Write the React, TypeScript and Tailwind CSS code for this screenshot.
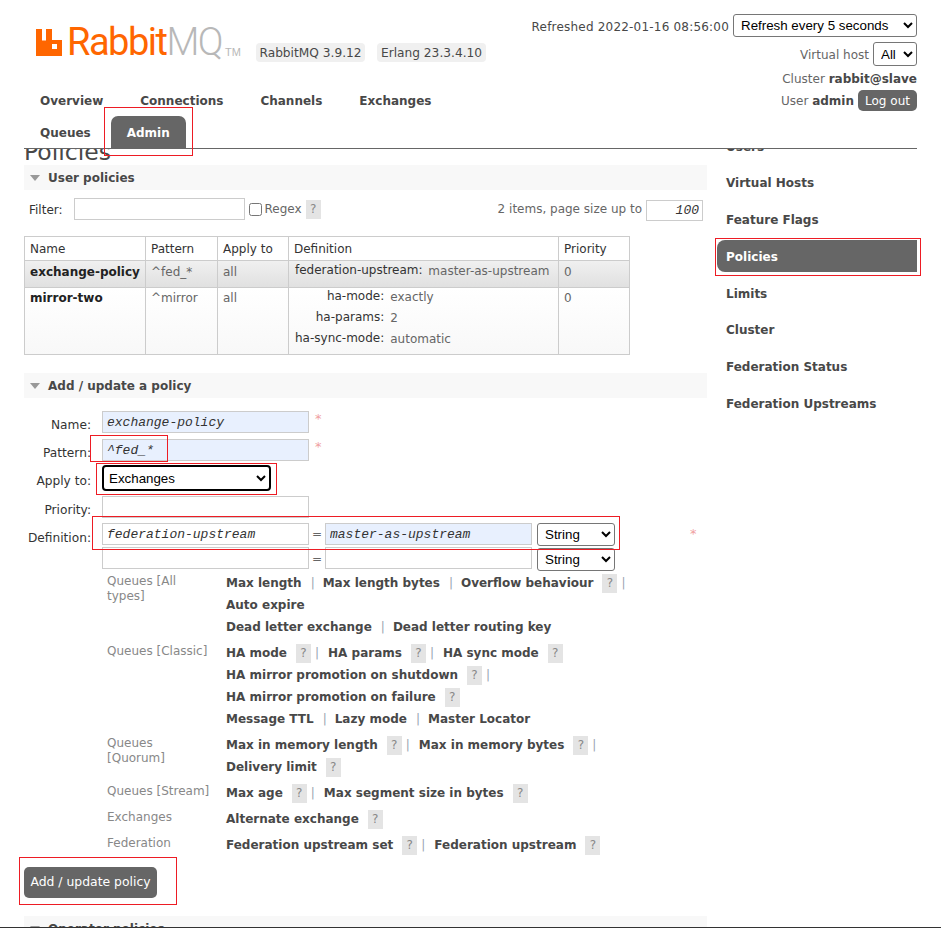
import { ReactNode } from "react";

const fontStack = "font-['DejaVu_Sans','Liberation_Sans',sans-serif]";

function Help({ className = "ml-[9px]" }: { className?: string }) {
    return (
        <span className={`inline-flex h-[19px] w-[15px] items-center justify-center bg-[#e4e4e4] text-[12px] font-normal text-[#888] ${className}`}>
            ?
        </span>
    );
}

function Sep({ tight }: { tight?: boolean }) {
    return <span className={`font-normal text-[#9aa5b1] ${tight ? "ml-[4px] mr-[9px]" : "ml-[9px] mr-[8px]"}`}>|</span>;
}

function SectionHeader({ title, className = "" }: { title: string; className?: string }) {
    return (
        <div className={`flex h-[25px] items-center bg-[#f8f8f8] pl-[6px] pt-[1px] ${className}`}>
            <span className="h-0 w-0 border-x-[5.5px] border-t-[6px] border-x-transparent border-t-[#999]" />
            <span className="ml-[8px] text-[12px] font-bold text-[#484848]">{title}</span>
        </div>
    );
}

function FormRow({ label, height, children }: { label: string; height: string; children: ReactNode }) {
    return (
        <div className={`flex items-center ${height}`}>
            <label className="w-[67px] shrink-0 pt-[7px] text-right text-[12.2px] text-[#333]">{label}</label>
            <div className="ml-[11px] flex items-center">{children}</div>
        </div>
    );
}

function MonoInput({ value, filled, className = "" }: { value?: string; filled?: boolean; className?: string }) {
    return (
        <input
            readOnly
            value={value ?? ""}
            className={`h-[22px] w-[207px] border border-[#ccc] px-[4px] font-['Liberation_Mono',monospace] text-[13px] text-[#333] italic ${filled ? "bg-[#e8f0fe]" : "bg-white"} ${className}`}
        />
    );
}

function NativeSelect({ value, className }: { value: string; className: string }) {
    return (
        <select
            value={value}
            onChange={() => undefined}
            className={`bg-white font-['Liberation_Sans',sans-serif] text-[13.33px] text-black ${className}`}
        >
            <option>{value}</option>
        </select>
    );
}

function Asterisk() {
    return <span className="ml-[6px] mt-[-8px] text-[13px] leading-none text-[#f0a0a0]">*</span>;
}

const helpGroups: { label: string; rows: ReactNode[] }[] = [
    {
        label: "Queues [All types]",
        rows: [
            <>
                <b>Max length</b>
                <Sep />
                <b>Max length bytes</b>
                <Sep />
                <b>Overflow behaviour</b>
                <Help />
                <Sep tight />
            </>,
            <b>Auto expire</b>,
            <>
                <b>Dead letter exchange</b>
                <Sep />
                <b>Dead letter routing key</b>
            </>,
        ],
    },
    {
        label: "Queues [Classic]",
        rows: [
            <>
                <b>HA mode</b>
                <Help />
                <Sep tight />
                <b>HA params</b>
                <Help />
                <Sep tight />
                <b>HA sync mode</b>
                <Help />
            </>,
            <>
                <b>HA mirror promotion on shutdown</b>
                <Help />
                <Sep tight />
            </>,
            <>
                <b>HA mirror promotion on failure</b>
                <Help />
            </>,
            <>
                <b>Message TTL</b>
                <Sep />
                <b>Lazy mode</b>
                <Sep />
                <b>Master Locator</b>
            </>,
        ],
    },
    {
        label: "Queues [Quorum]",
        rows: [
            <>
                <b>Max in memory length</b>
                <Help />
                <Sep tight />
                <b>Max in memory bytes</b>
                <Help />
                <Sep tight />
            </>,
            <>
                <b>Delivery limit</b>
                <Help />
            </>,
        ],
    },
    {
        label: "Queues [Stream]",
        rows: [
            <>
                <b>Max age</b>
                <Help />
                <Sep tight />
                <b>Max segment size in bytes</b>
                <Help />
            </>,
        ],
    },
    {
        label: "Exchanges",
        rows: [
            <>
                <b>Alternate exchange</b>
                <Help />
            </>,
        ],
    },
    {
        label: "Federation",
        rows: [
            <>
                <b>Federation upstream set</b>
                <Help />
                <Sep tight />
                <b>Federation upstream</b>
                <Help />
            </>,
        ],
    },
];

const sideItems = ["Users", "Virtual Hosts", "Feature Flags", "Policies", "Limits", "Cluster", "Federation Status", "Federation Upstreams"];

function DefinitionRow({ name, value }: { name: string; value: string }) {
    return (
        <tr>
            <td className="pr-[4px] text-right align-top text-[#333]">{name}</td>
            <td className="pl-[2px] pt-[1px] text-[#666]">{value}</td>
        </tr>
    );
}

export default function App() {
    return (
        <div className={`relative flex h-[928px] w-[941px] flex-col overflow-hidden bg-white text-[12px] text-[#484848] ${fontStack}`}>
            {/* header */}
            <header className="mx-[24px] flex h-[149px] shrink-0 justify-between border-b border-[#666]">
                <div>
                    <div className="flex h-[86px] items-start pl-[12px] pt-[29px]">
                        <div className="flex w-[220px] shrink-0 items-start">
                            <svg width="26" height="27" viewBox="0 0 26 27" className="shrink-0">
                                <path
                                    fill="#f60"
                                    fillRule="evenodd"
                                    d="M0 0h6v11.5h4V0h6v11h10v16H0ZM16 15v5h5v-5Z"
                                />
                            </svg>
                            <span className="ml-[5px] mt-[-10px] font-['Roboto',sans-serif] text-[38px] leading-[46px] tracking-[-1.5px] text-[#f60]">
                                Rabbit<span className="font-light text-[#b8b8b8]">MQ</span>
                            </span>
                            <span className="ml-[3px] mt-[17px] font-['Liberation_Sans',sans-serif] text-[11px] leading-[12px] text-[#b8b8b8]">TM</span>
                        </div>
                        <span className="mt-[14px] flex h-[19px] w-[109px] items-center justify-center rounded-[4px] bg-[#f0f0f0] pt-[1px] text-[12.2px]">RabbitMQ 3.9.12</span>
                        <span className="ml-[12px] mt-[14px] flex h-[19px] w-[109px] items-center justify-center rounded-[4px] bg-[#f0f0f0] pt-[1px] text-[12.2px]">Erlang 23.3.4.10</span>
                    </div>
                    <nav className="text-[12px] font-bold text-[#484848]">
                        <div className="flex h-[28px] items-center gap-[37px] pl-[16px] pt-[2px]">
                            <span>Overview</span>
                            <span>Connections</span>
                            <span>Channels</span>
                            <span>Exchanges</span>
                        </div>
                        <div className="mt-[2px] flex h-[32px] items-center pl-[16px]">
                            <span className="pt-[2px]">Queues</span>
                            <span className="ml-[20px] flex h-[32px] w-[75px] items-center justify-center rounded-t-[7px] bg-[#666] pt-[2px] text-white">Admin</span>
                        </div>
                    </nav>
                </div>
                <div className="flex flex-col items-end pt-[14px]">
                    <div className="flex items-center gap-[4px]">
                        <span className="pt-[2px] tracking-[0.2px]">Refreshed 2022-01-16 08:56:00</span>
                        <NativeSelect value="Refresh every 5 seconds" className="h-[23px] w-[184px] rounded-[3px] border border-[#767676] pl-[3px]" />
                    </div>
                    <div className="mt-[5px] flex items-center gap-[4px]">
                        <span className="pt-[1px] text-[#666]">Virtual host</span>
                        <NativeSelect value="All" className="h-[24px] w-[44px] rounded-[3px] border border-[#767676] pl-[3px]" />
                    </div>
                    <div className="mt-[5px] leading-[16px]">
                        <span className="text-[#666]">Cluster </span>
                        <b>rabbit@slave</b>
                    </div>
                    <div className="mt-[3px] flex items-center gap-[4px]">
                        <span>
                            <span className="text-[#666]">User </span>
                            <b>admin</b>
                        </span>
                        <span className="flex h-[21px] w-[59px] items-center justify-center rounded-[5px] bg-[#666] text-white">Log out</span>
                    </div>
                </div>
            </header>

            <div className="flex flex-1 overflow-hidden">
                <main className="ml-[24px] w-[683px] shrink-0">
                    <h1 className="mt-[-11px] h-[27px] text-[23.5px] leading-[28px] font-normal text-[#484848]">Policies</h1>
                    <SectionHeader title="User policies" />

                    <div className="mt-[8px] flex h-[22px] items-center justify-between pl-[5px] pr-[4px]">
                        <div className="flex items-center">
                            <label className="pt-[1px] text-[#333]">Filter:</label>
                            <input readOnly className="ml-[11px] h-[22px] w-[171px] border border-[#ccc] bg-white" />
                            <input type="checkbox" readOnly className="ml-[4px] h-[13px] w-[13px]" />
                            <span className="ml-[3px] text-[#666]">Regex</span>
                            <Help className="ml-[4px]" />
                        </div>
                        <div className="flex items-center">
                            <span className="text-[#666]">2 items, page size up to</span>
                            <input readOnly value="100" className="ml-[4px] mt-[2px] h-[21px] w-[57px] border border-[#ccc] bg-white px-[3px] text-right font-['Liberation_Mono',monospace] text-[13px] text-[#333] italic" />
                        </div>
                    </div>

                    <table className="mt-[16px] w-[605px] table-fixed border-collapse text-left">
                        <colgroup>
                            <col className="w-[121px]" />
                            <col className="w-[72px]" />
                            <col className="w-[71px]" />
                            <col className="w-[270px]" />
                            <col className="w-[71px]" />
                        </colgroup>
                        <thead>
                            <tr className="h-[24px] text-[#333]">
                                <th className="border border-[#ccc] px-[5px] font-normal">Name</th>
                                <th className="border border-[#ccc] px-[5px] font-normal">Pattern</th>
                                <th className="border border-[#ccc] px-[5px] font-normal">Apply to</th>
                                <th className="border border-[#ccc] px-[5px] font-normal">Definition</th>
                                <th className="border border-[#ccc] px-[5px] font-normal">Priority</th>
                            </tr>
                        </thead>
                        <tbody>
                            <tr className="h-[27px] bg-gradient-to-b from-[#f0f0f0] to-[#e0e0e0] align-top">
                                <td className="border border-[#ccc] px-[5px] pt-[2px] font-bold text-[#222]">exchange-policy</td>
                                <td className="border border-[#ccc] px-[5px] pt-[2px] text-[#666]">^fed_*</td>
                                <td className="border border-[#ccc] px-[5px] pt-[2px] text-[#666]">all</td>
                                <td className="whitespace-nowrap border border-[#ccc] px-[6px] text-[#333]">
                                    federation-upstream: <span className="relative top-[1px] ml-[2px] text-[#666]">master-as-upstream</span>
                                </td>
                                <td className="border border-[#ccc] px-[5px] pt-[2px] text-[#666]">0</td>
                            </tr>
                            <tr className="h-[67px] bg-gradient-to-b from-white to-[#f8f8f8] align-top">
                                <td className="border border-[#ccc] px-[5px] pt-[1px] font-bold text-[#222]">mirror-two</td>
                                <td className="border border-[#ccc] px-[5px] pt-[1px] text-[#666]">^mirror</td>
                                <td className="border border-[#ccc] px-[5px] pt-[1px] text-[#666]">all</td>
                                <td className="border border-[#ccc] px-[6px]">
                                    <table className="mt-[-2px] leading-[20px]">
                                        <tbody>
                                            <DefinitionRow name="ha-mode:" value="exactly" />
                                            <DefinitionRow name="ha-params:" value="2" />
                                            <DefinitionRow name="ha-sync-mode:" value="automatic" />
                                        </tbody>
                                    </table>
                                </td>
                                <td className="border border-[#ccc] px-[5px] pt-[1px] text-[#666]">0</td>
                            </tr>
                        </tbody>
                    </table>

                    <SectionHeader title="Add / update a policy" className="mt-[18px]" />

                    <div className="mt-[10px] flex flex-col">
                        <FormRow label="Name:" height="h-[28px]">
                            <MonoInput value="exchange-policy" filled />
                            <Asterisk />
                        </FormRow>
                        <FormRow label="Pattern:" height="h-[28px]">
                            <MonoInput value="^fed_*" filled />
                            <Asterisk />
                        </FormRow>
                        <FormRow label="Apply to:" height="h-[28px]">
                            <NativeSelect value="Exchanges" className="h-[26px] w-[169px] rounded-[4px] border-2 border-black pl-[1px]" />
                        </FormRow>
                        <FormRow label="Priority:" height="h-[29px]">
                            <MonoInput />
                        </FormRow>
                        <div className="flex h-[26px] items-center">
                            <label className="w-[67px] shrink-0 pt-[9px] text-right text-[12.2px] text-[#333]">Definition:</label>
                            <div className="ml-[11px] flex w-[605px] items-center">
                                <MonoInput value="federation-upstream" />
                                <span className="w-[16px] text-center text-[#666]">=</span>
                                <MonoInput value="master-as-upstream" filled />
                                <NativeSelect value="String" className="ml-[5px] h-[23px] w-[78px] rounded-[3px] border border-[#767676] pl-[3px]" />
                                <span className="ml-[69px]"><Asterisk /></span>
                            </div>
                        </div>
                        <div className="flex h-[24px] items-center pl-[78px]">
                            <MonoInput className="mt-[-2px]" />
                            <span className="w-[16px] text-center text-[#666]">=</span>
                            <MonoInput className="mt-[-2px]" />
                            <NativeSelect value="String" className="ml-[5px] h-[23px] w-[78px] rounded-[3px] border border-[#767676] pl-[3px]" />
                        </div>
                    </div>

                    <div className="ml-[83px] mt-[1px] flex flex-col">
                        {helpGroups.map((group) => (
                            <div key={group.label} className="flex">
                                <div className="mr-[13px] w-[106px] shrink-0 pt-[2px] text-[12px] leading-[15px] text-[#888]">{group.label}</div>
                                <div className="flex-1">
                                    {group.rows.map((row, i) => (
                                        <div key={i} className="flex h-[22px] items-center whitespace-pre text-[12px] text-[#484848] [&_b]:font-bold">
                                            {row}
                                        </div>
                                    ))}
                                    <div className="h-[4px]" />
                                </div>
                            </div>
                        ))}
                    </div>

                    <button className="mt-[7px] flex h-[31px] w-[133px] items-center justify-center rounded-[5px] bg-[#666] text-[12.4px] text-white">
                        Add / update policy
                    </button>

                    <SectionHeader title="Operator policies" className="mt-[18px]" />
                </main>

                <aside className="ml-[10px] mt-[-19px] w-[200px] shrink-0 text-[12px] font-bold text-[#484848]">
                    {sideItems.map((item) => (
                        <div
                            key={item}
                            className={`mb-[4.75px] flex h-[32px] items-center pl-[9px] pt-[1px] ${item === "Policies" ? "rounded-l-[8px] bg-[#666] text-white" : ""}`}
                        >
                            {item}
                        </div>
                    ))}
                </aside>
            </div>
            <div className="h-[1px] shrink-0 bg-[#333]" />

            {/* red annotation boxes drawn over the screenshot */}
            <div className="absolute left-[104px] top-[107px] h-[49px] w-[89px] border border-[#ed1c24]" />
            <div className="absolute left-[715px] top-[238px] h-[38px] w-[206px] border border-[#ed1c24]" />
            <div className="absolute left-[90px] top-[435px] h-[27px] w-[78px] border border-[#ed1c24]" />
            <div className="absolute left-[96px] top-[463px] h-[32px] w-[181px] border border-[#ed1c24]" />
            <div className="absolute left-[92px] top-[516px] h-[34px] w-[528px] border border-[#ed1c24]" />
            <div className="absolute left-[19px] top-[857px] h-[48px] w-[158px] border border-[#ed1c24]" />
        </div>
    );
}
